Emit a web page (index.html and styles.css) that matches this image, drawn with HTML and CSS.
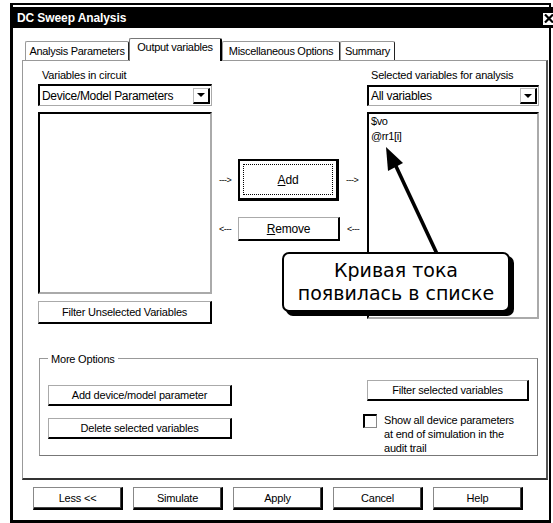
FILE: index.html
```html
<!DOCTYPE html>
<html>
<head>
<meta charset="utf-8">
<link rel="stylesheet" href="styles.css">
</head>
<body>
<div class="window">
  <div class="titlebar">
    <span class="title">DC Sweep Analysis</span>
    <span class="close"><svg width="10" height="9" viewBox="0 0 10 9"><path d="M1 0.5 L9 8.5 M9 0.5 L1 8.5" stroke="#000" stroke-width="2.2"/></svg></span>
  </div>
  <div class="tabs">
    <div class="tab t1">Analysis Parameters</div>
    <div class="tab t2 active">Output variables</div>
    <div class="tab t3">Miscellaneous Options</div>
    <div class="tab t4">Summary</div>
  </div>
  <div class="panel">
    <div class="upper">
      <div class="col left">
        <div class="label">Variables in circuit</div>
        <div class="combo"><span class="combo-text">Device/Model Parameters</span><span class="combo-btn"><i class="tri"></i></span></div>
        <div class="listbox lb-left"></div>
        <div class="btn btn-filter">Filter Unselected Variables</div>
      </div>
      <div class="col mid">
        <div class="move-row add-row">
          <span class="arr">---&gt;</span>
          <div class="btn btn-default"><span class="focus"><u>A</u>dd</span></div>
          <span class="arr">---&gt;</span>
        </div>
        <div class="move-row rem-row">
          <span class="arr">&lt;---</span>
          <div class="btn btn-remove"><u>R</u>emove</div>
          <span class="arr">&lt;---</span>
        </div>
      </div>
      <div class="col right">
        <div class="label">Selected variables for analysis</div>
        <div class="combo combo-r"><span class="combo-text">All variables</span><span class="combo-btn"><i class="tri"></i></span></div>
        <div class="listbox lb-right">
          <div class="item">$vo</div>
          <div class="item">@rr1[i]</div>
        </div>
      </div>
    </div>
    <div class="group">
      <span class="legend">More Options</span>
      <div class="group-body">
        <div class="gcol gleft">
          <div class="btn gbtn">Add device/model parameter</div>
          <div class="btn gbtn">Delete selected variables</div>
        </div>
        <div class="gcol gright">
          <div class="btn gbtn-r">Filter selected variables</div>
          <div class="check-row">
            <span class="checkbox"></span>
            <span class="check-text">Show all device parameters<br>at end of simulation in the<br>audit trail</span>
          </div>
        </div>
      </div>
    </div>
  </div>
  <div class="bottom-btns">
    <div class="btn bbtn">Less &lt;&lt;</div>
    <div class="btn bbtn">Simulate</div>
    <div class="btn bbtn">Apply</div>
    <div class="btn bbtn">Cancel</div>
    <div class="btn bbtn">Help</div>
  </div>
</div>
<svg class="pointer" width="553" height="523" viewBox="0 0 553 523">
  <line x1="438" y1="256" x2="394" y2="162" stroke="#000" stroke-width="3.6"/>
  <polygon points="386,147 403,163 388,171" fill="#000"/>
</svg>
<div class="callout">Кривая тока<br>появилась в списке</div>
</body>
</html>
```

FILE: styles.css
```css
html, body {
  margin: 0;
  padding: 0;
  background: #fff;
}
body {
  font-family: "Liberation Sans", Arial, sans-serif;
  font-size: 11px;
  color: #000;
  width: 553px;
  height: 523px;
  overflow: hidden;
  position: relative;
}
.window {
  box-sizing: border-box;
  margin: 3px 0 0 10px;
  width: 541px;
  height: 520px;
  border-style: solid;
  border-color: #000;
  border-width: 2px 2px 3px 3px;
}
.titlebar {
  margin: 2px -8px 0 0;
  height: 21px;
  background: #000;
  display: flex;
  align-items: center;
  justify-content: space-between;
  padding: 0 0 0 4px;
}
.title {
  color: #fff;
  font-weight: bold;
  font-size: 12px;
  letter-spacing: -0.1px;
}
.close {
  width: 12px;
  height: 12px;
  background: #fff;
  border: 1px solid #000;
  display: flex;
  align-items: center;
  justify-content: center;
  margin-right: 1px;
  margin-top: 2px;
}
.tabs {
  display: flex;
  align-items: flex-end;
  height: 22px;
  margin-top: 11px;
  padding-left: 12px;
  position: relative;
  z-index: 2;
  margin-bottom: -1px;
}
.tab {
  box-sizing: border-box;
  height: 19px;
  border: 1px solid #999;
  border-right-color: #222;
  border-bottom: none;
  border-radius: 2px 2px 0 0;
  background: #fff;
  text-align: center;
  line-height: 18px;
  letter-spacing: -0.3px;
  margin-bottom: 1px;
}
.t1 { width: 104px; }
.t2 { width: 93px; }
.t3 { width: 118px; }
.t4 { width: 55px; }
.tab.active {
  height: 23px;
  margin-bottom: 0;
  line-height: 17px;
  border-left: 1px solid #777;
  border-top: 1px solid #777;
  border-right: 2px solid #000;
}
.panel {
  box-sizing: border-box;
  margin: 0 1px 0 9px;
  height: 420px;
  border-style: solid;
  border-width: 1px 2px 2px 1px;
  border-color: #999 #555 #333 #999;
  position: relative;
  z-index: 1;
}
.upper {
  display: grid;
  grid-template-columns: 174px 155px 172px;
  margin-left: 15px;
  padding-top: 7px;
}
.col {
  display: flex;
  flex-direction: column;
}
.label {
  height: 14px;
  line-height: 14px;
  padding-left: 4px;
  letter-spacing: -0.2px;
}
.combo {
  box-sizing: border-box;
  margin-top: 2px;
  height: 22px;
  border-style: solid;
  border-width: 2px 1px 1px 2px;
  border-color: #000 #aaa #aaa #000;
  display: flex;
  align-items: center;
  justify-content: space-between;
  padding-left: 2px;
  font-size: 12px;
  letter-spacing: -0.3px;
}
.combo-r {
  margin-top: 3px;
  height: 21px;
}
.combo-btn {
  box-sizing: border-box;
  width: 17px;
  height: 16px;
  border-style: solid;
  border-width: 1px 2px 2px 1px;
  border-color: #bbb #000 #000 #bbb;
  display: flex;
  align-items: center;
  justify-content: center;
  margin-right: 1px;
}
.tri {
  width: 0;
  height: 0;
  border-left: 4px solid transparent;
  border-right: 4px solid transparent;
  border-top: 4px solid #000;
}
.listbox {
  box-sizing: border-box;
  margin-top: 6px;
  border-style: solid;
  border-width: 2px 2px 2px 2px;
  border-color: #000 #aaa #aaa #000;
  padding: 0 2px;
}
.lb-left { height: 182px; }
.lb-right { height: 207px; }
.item {
  line-height: 15px;
  letter-spacing: -0.4px;
}
.btn {
  box-sizing: border-box;
  border-style: solid;
  border-width: 1px 2px 2px 1px;
  border-color: #aaa #000 #000 #aaa;
  display: flex;
  align-items: center;
  justify-content: center;
  background: #fff;
  letter-spacing: -0.2px;
  font-size: 11px;
}
.btn-filter {
  margin-top: 7px;
  height: 23px;
}
.mid {
  padding-left: 7px;
}
.move-row {
  display: flex;
  align-items: center;
}
.add-row {
  margin-top: 91px;
  height: 42px;
}
.rem-row {
  margin-top: 16px;
  height: 24px;
}
.arr {
  width: 14px;
  font-size: 9px;
  letter-spacing: -0.5px;
}
.add-row .btn, .rem-row .btn {
  margin: 0 7px 0 5px;
}
.btn-default {
  width: 101px;
  height: 42px;
  border: 2px solid #000;
  border-right-width: 3px;
  border-bottom-width: 3px;
  padding: 3px;
  font-size: 12px;
}
.focus {
  flex: 1;
  align-self: stretch;
  border: 1px dotted #000;
  display: flex;
  align-items: center;
  justify-content: center;
}
.btn-remove {
  width: 102px;
  height: 24px;
  font-size: 12px;
}
.group {
  box-sizing: border-box;
  margin: 34px 0 0 16px;
  width: 499px;
  height: 98px;
  border: 1px solid #999;
  border-right-color: #777;
  border-bottom-color: #777;
}
.legend {
  display: block;
  width: fit-content;
  margin: -7px 0 0 8px;
  padding: 0 3px;
  background: #fff;
  line-height: 14px;
  letter-spacing: -0.2px;
}
.group-body {
  display: flex;
  justify-content: space-between;
  padding: 0 8px;
}
.gleft {
  width: 184px;
  padding-top: 19px;
  display: flex;
  flex-direction: column;
  gap: 12px;
}
.gbtn {
  height: 21px;
}
.gright {
  width: 166px;
  padding-top: 14px;
  display: flex;
  flex-direction: column;
}
.gbtn-r {
  margin-left: 4px;
  height: 21px;
}
.check-row {
  display: flex;
  margin-top: 12px;
}
.checkbox {
  box-sizing: border-box;
  width: 14px;
  height: 14px;
  border-style: solid;
  border-width: 2px 1px 1px 2px;
  border-color: #000 #888 #888 #000;
  flex: none;
  margin-top: 1px;
}
.check-text {
  margin-left: 7px;
  line-height: 14px;
  letter-spacing: -0.2px;
}
.bottom-btns {
  display: flex;
  gap: 10px;
  padding-left: 20px;
  margin-top: 7px;
}
.bbtn {
  width: 90px;
  height: 23px;
  border-width: 1px 2px 2px 1px;
  border-color: #888 #000 #000 #888;
  box-shadow: inset -1px -1px 0 #444;
}
.pointer {
  position: absolute;
  left: 0;
  top: 0;
  pointer-events: none;
  z-index: 5;
}
.callout {
  position: absolute;
  left: 282px;
  top: 252px;
  box-sizing: border-box;
  width: 228px;
  height: 60px;
  border: 2px solid #000;
  border-radius: 7px;
  background: #fff;
  box-shadow: 4px 4px 0 #000;
  font-family: "DejaVu Sans", sans-serif;
  font-size: 19px;
  line-height: 23px;
  text-align: center;
  padding-top: 5px;
  z-index: 6;
}
```
